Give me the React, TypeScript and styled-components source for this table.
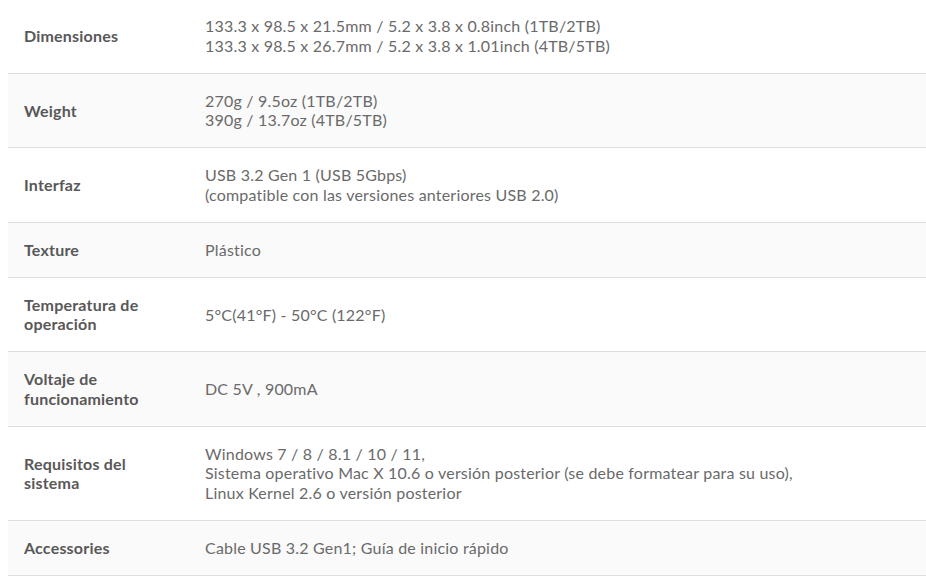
import React from "react";
import styled, { createGlobalStyle } from "styled-components";

const GlobalStyle = createGlobalStyle`
  html, body {
    margin: 0;
    padding: 0;
    background: #ffffff;
  }
  body {
    font-family: "Lato", "Open Sans", sans-serif;
    -webkit-font-smoothing: antialiased;
  }
`;

type Spec = { label: string; lines: string[] };

const specs: Spec[] = [
  {
    label: "Dimensiones",
    lines: [
      "133.3 x 98.5 x 21.5mm / 5.2 x 3.8 x 0.8inch (1TB/2TB)",
      "133.3 x 98.5 x 26.7mm / 5.2 x 3.8 x 1.01inch (4TB/5TB)",
    ],
  },
  {
    label: "Weight",
    lines: ["270g / 9.5oz (1TB/2TB)", "390g / 13.7oz (4TB/5TB)"],
  },
  {
    label: "Interfaz",
    lines: [
      "USB 3.2 Gen 1 (USB 5Gbps)",
      "(compatible con las versiones anteriores USB 2.0)",
    ],
  },
  { label: "Texture", lines: ["Plástico"] },
  {
    label: "Temperatura de operación",
    lines: ["5°C(41°F) - 50°C (122°F)"],
  },
  { label: "Voltaje de funcionamiento", lines: ["DC 5V , 900mA"] },
  {
    label: "Requisitos del sistema",
    lines: [
      "Windows 7 / 8 / 8.1 / 10 / 11,",
      "Sistema operativo Mac X 10.6 o versión posterior (se debe formatear para su uso),",
      "Linux Kernel 2.6 o versión posterior",
    ],
  },
  { label: "Accessories", lines: ["Cable USB 3.2 Gen1; Guía de inicio rápido"] },
];

const App = () => {
  return (
    <>
      <GlobalStyle />
      <Container>
        <Table>
          {specs.map((s, i) => (
            <Row key={s.label} $shaded={i % 2 === 1}>
              <Label>{s.label}</Label>
              <Value>
                {s.lines.map((l) => (
                  <span key={l}>{l}</span>
                ))}
              </Value>
            </Row>
          ))}
        </Table>
      </Container>
    </>
  );
};

export default App;

const Container = styled.div`
  width: 100%;
  padding-left: 8px;
  box-sizing: border-box;
  margin-top: -1px;
`;

const Table = styled.div`
  display: flex;
  flex-direction: column;
`;

const Row = styled.div<{ $shaded: boolean }>`
  display: grid;
  grid-template-columns: 181px 1fr;
  align-items: center;
  border-bottom: 1px solid #dedede;
  background-color: ${(p) => (p.$shaded ? "#fafafa" : "#ffffff")};
`;

const Label = styled.div`
  padding: 17.25px 16px;
  font-size: 16px;
  line-height: 19.5px;
  font-weight: 700;
  letter-spacing: 0.2px;
  color: #585858;
  max-width: 135px;
`;

const Value = styled.div`
  padding: 17.25px 16px;
  display: flex;
  flex-direction: column;
  font-size: 16px;
  line-height: 19.5px;
  letter-spacing: 0.2px;
  color: #6a6a6a;

  span {
    display: block;
  }
`;
